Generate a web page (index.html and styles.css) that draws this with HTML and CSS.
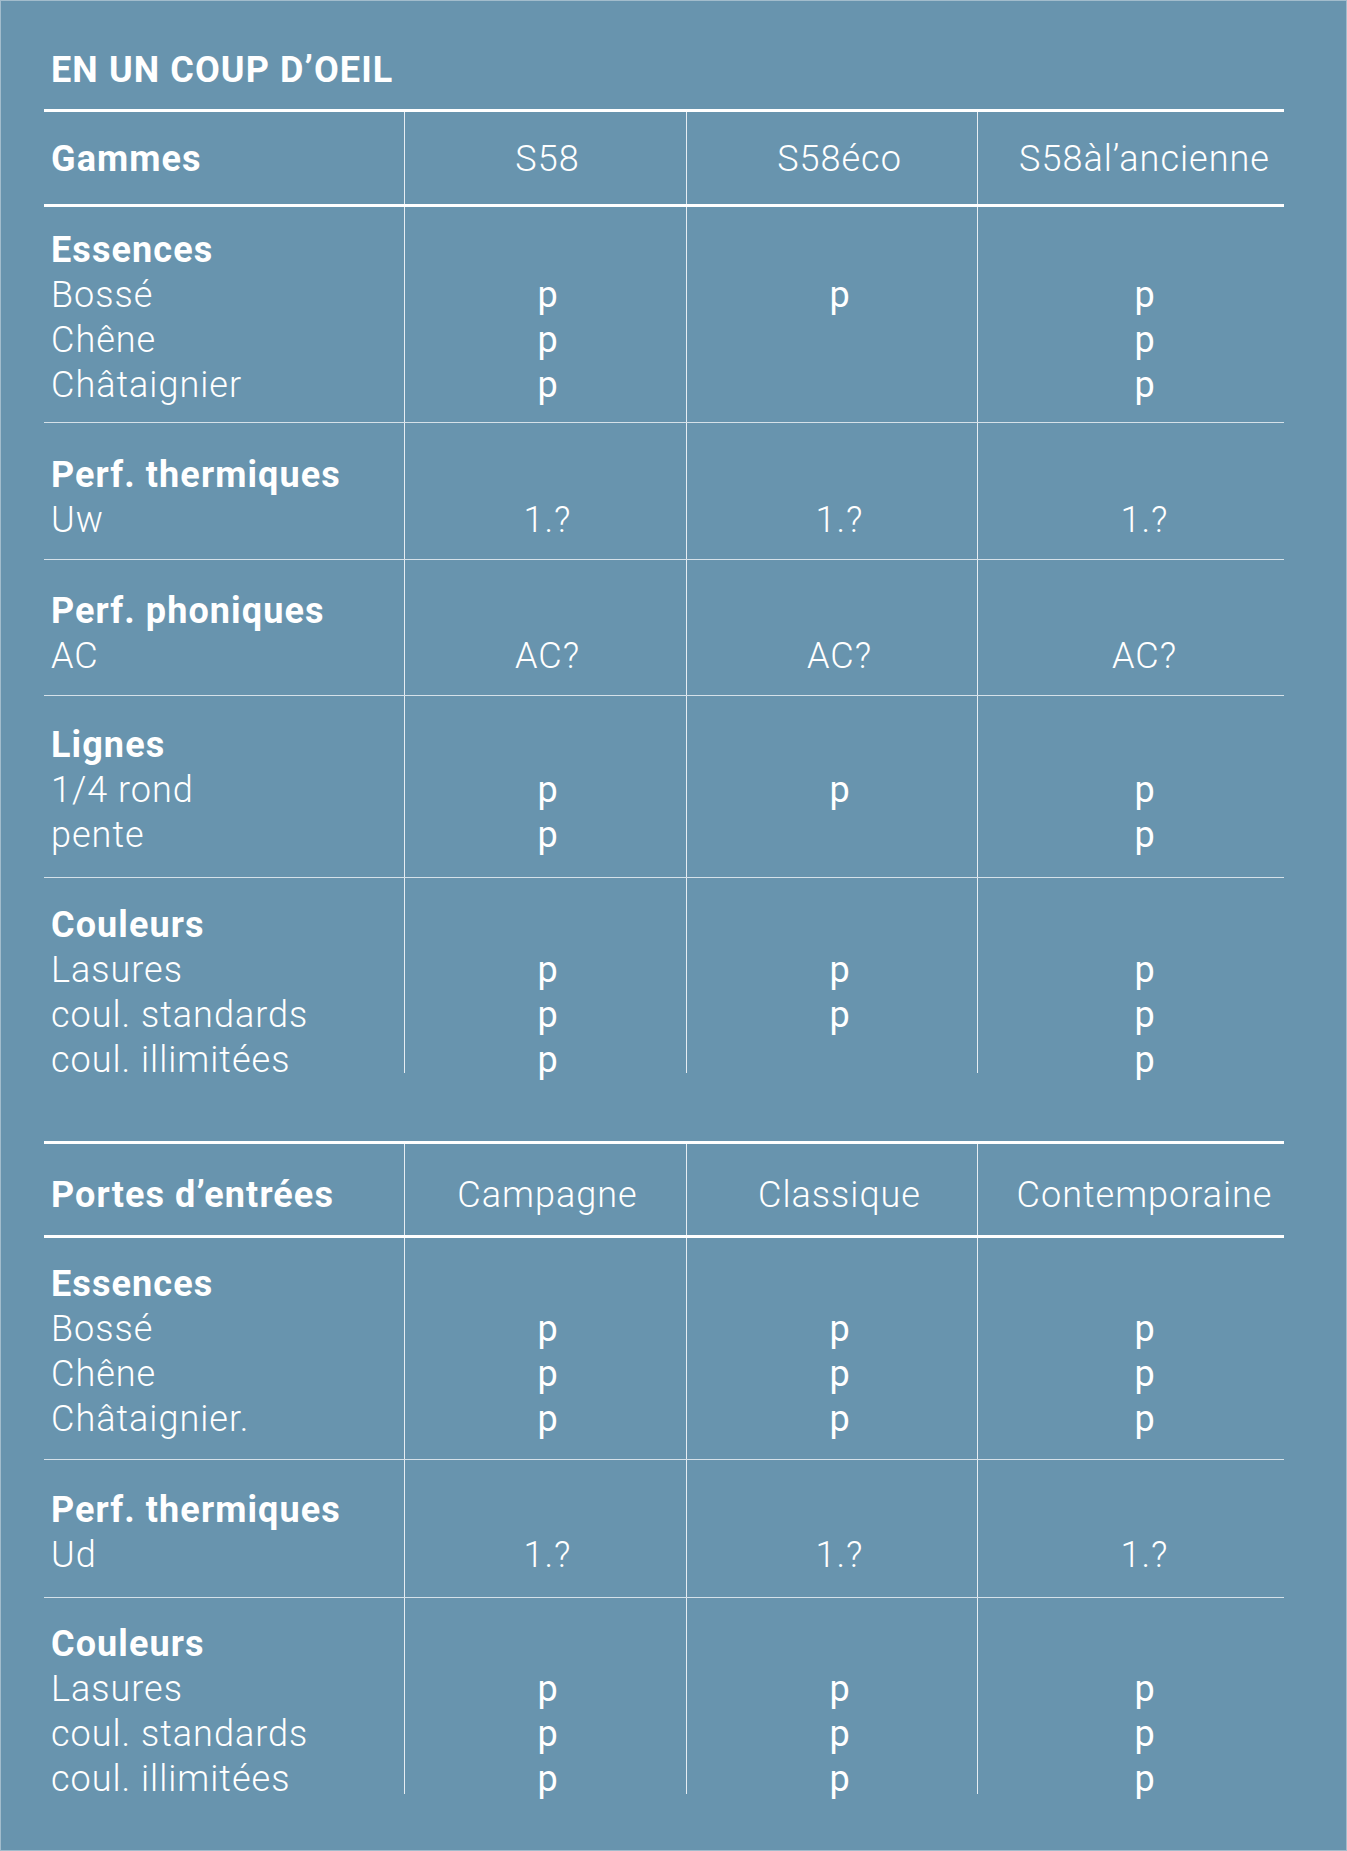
FILE: index.html
```html
<!DOCTYPE html>
<html lang="fr">
<head>
<meta charset="utf-8">
<title>En un coup d'oeil</title>
<link rel="stylesheet" href="styles.css">
</head>
<body>
<main class="sheet">
  <h1 class="title">EN UN COUP D’OEIL</h1>

  <section class="table">
    <div class="row head h1">
      <div class="cell label"><div class="b">Gammes</div></div>
      <div class="cell v c1">S58</div>
      <div class="cell v c2">S58éco</div>
      <div class="cell v c3">S58àl’ancienne</div>
    </div>
    <div class="row r-ess1">
      <div class="cell label"><div class="b">Essences</div><div>Bossé</div><div>Chêne</div><div>Châtaignier</div></div>
      <div class="cell v c1 mk"><div>&nbsp;</div><div>p</div><div>p</div><div>p</div></div>
      <div class="cell v c2 mk"><div>&nbsp;</div><div>p</div></div>
      <div class="cell v c3 mk"><div>&nbsp;</div><div>p</div><div>p</div><div>p</div></div>
    </div>
    <div class="row r-th1">
      <div class="cell label"><div class="b">Perf. thermiques</div><div>Uw</div></div>
      <div class="cell v c1"><div>&nbsp;</div><div>1.?</div></div>
      <div class="cell v c2"><div>&nbsp;</div><div>1.?</div></div>
      <div class="cell v c3"><div>&nbsp;</div><div>1.?</div></div>
    </div>
    <div class="row r-ph1">
      <div class="cell label"><div class="b">Perf. phoniques</div><div>AC</div></div>
      <div class="cell v c1"><div>&nbsp;</div><div>AC?</div></div>
      <div class="cell v c2"><div>&nbsp;</div><div>AC?</div></div>
      <div class="cell v c3"><div>&nbsp;</div><div>AC?</div></div>
    </div>
    <div class="row r-li1">
      <div class="cell label"><div class="b">Lignes</div><div>1/4 rond</div><div>pente</div></div>
      <div class="cell v c1 mk"><div>&nbsp;</div><div>p</div><div>p</div></div>
      <div class="cell v c2 mk"><div>&nbsp;</div><div>p</div></div>
      <div class="cell v c3 mk"><div>&nbsp;</div><div>p</div><div>p</div></div>
    </div>
    <div class="row last r-co1">
      <div class="cell label"><div class="b">Couleurs</div><div>Lasures</div><div>coul. standards</div><div>coul. illimitées</div></div>
      <div class="cell v c1 mk"><div>&nbsp;</div><div>p</div><div>p</div><div>p</div></div>
      <div class="cell v c2 mk"><div>&nbsp;</div><div>p</div><div>p</div></div>
      <div class="cell v c3 mk"><div>&nbsp;</div><div>p</div><div>p</div><div>p</div></div>
    </div>
  </section>

  <section class="table second">
    <div class="row head h2">
      <div class="cell label"><div class="b">Portes d’entrées</div></div>
      <div class="cell v c1">Campagne</div>
      <div class="cell v c2">Classique</div>
      <div class="cell v c3">Contemporaine</div>
    </div>
    <div class="row r-ess2">
      <div class="cell label"><div class="b">Essences</div><div>Bossé</div><div>Chêne</div><div>Châtaignier.</div></div>
      <div class="cell v c1 mk"><div>&nbsp;</div><div>p</div><div>p</div><div>p</div></div>
      <div class="cell v c2 mk"><div>&nbsp;</div><div>p</div><div>p</div><div>p</div></div>
      <div class="cell v c3 mk"><div>&nbsp;</div><div>p</div><div>p</div><div>p</div></div>
    </div>
    <div class="row r-th2">
      <div class="cell label"><div class="b">Perf. thermiques</div><div>Ud</div></div>
      <div class="cell v c1"><div>&nbsp;</div><div>1.?</div></div>
      <div class="cell v c2"><div>&nbsp;</div><div>1.?</div></div>
      <div class="cell v c3"><div>&nbsp;</div><div>1.?</div></div>
    </div>
    <div class="row last r-co2">
      <div class="cell label"><div class="b">Couleurs</div><div>Lasures</div><div>coul. standards</div><div>coul. illimitées</div></div>
      <div class="cell v c1 mk"><div>&nbsp;</div><div>p</div><div>p</div><div>p</div></div>
      <div class="cell v c2 mk"><div>&nbsp;</div><div>p</div><div>p</div><div>p</div></div>
      <div class="cell v c3 mk"><div>&nbsp;</div><div>p</div><div>p</div><div>p</div></div>
    </div>
  </section>
</main>
</body>
</html>
```

FILE: styles.css
```css
html, body {
  margin: 0;
  padding: 0;
  background: #6894ae;
}

body {
  min-height: 1851px;
  box-sizing: border-box;
  border: 1px solid #a2bccc;
  font-family: Roboto, "Liberation Sans", Arial, sans-serif;
  color: #ffffff;
}

.sheet {
  padding: 47px 62px 0 43px;
}

.title {
  margin: 0 0 16px 0;
  padding-left: 7px;
  font-size: 36px;
  line-height: 45px;
  font-weight: 700;
  letter-spacing: 1.1px;
}

.table {
  width: 1240px;
  border-top: 3px solid #ffffff;
  font-size: 36px;
  line-height: 45px;
  font-weight: 300;
  letter-spacing: 1px;
}

.table.second {
  margin-top: 68px;
}

.row {
  display: grid;
  grid-template-columns: 360px 282px 291px 307px;
  border-bottom: 1px solid #d5e1e9;
  --pt: 24px;
  --pb: 19px;
}

.row.head {
  border-bottom: 3px solid #ffffff;
}

.row.last {
  border-bottom: none;
}

.cell {
  box-sizing: border-box;
  padding-top: var(--pt);
  padding-bottom: var(--pb);
}

.label {
  padding-left: 7px;
  white-space: nowrap;
}

.b {
  font-weight: 700;
  letter-spacing: 1.1px;
}

.v {
  border-left: 1px solid #e6edf2;
  text-align: center;
  white-space: nowrap;
}

.c1 { padding-left: 4px; }
.c2 { padding-left: 15px; }
.c3 { padding-left: 27px; }

.mk {
  font-weight: 400;
  letter-spacing: 0;
}

/* row vertical rhythm */
.h1 { --pt: 25px; --pb: 22px; }
.r-ess1 { --pt: 21px; --pb: 14px; }
.r-th1 { --pt: 30px; --pb: 16px; }
.r-ph1 { --pt: 29px; --pb: 16px; }
.r-li1 { --pt: 27px; --pb: 19px; }
.r-co1 { --pt: 25px; --pb: 0px; grid-template-rows: 195px; }

.h2 { --pt: 29px; --pb: 17px; }
.r-ess2 { --pt: 24px; --pb: 17px; }
.r-th2 { --pt: 28px; --pb: 19px; }
.r-co2 { --pt: 24px; --pb: 0px; grid-template-rows: 196px; }
```
